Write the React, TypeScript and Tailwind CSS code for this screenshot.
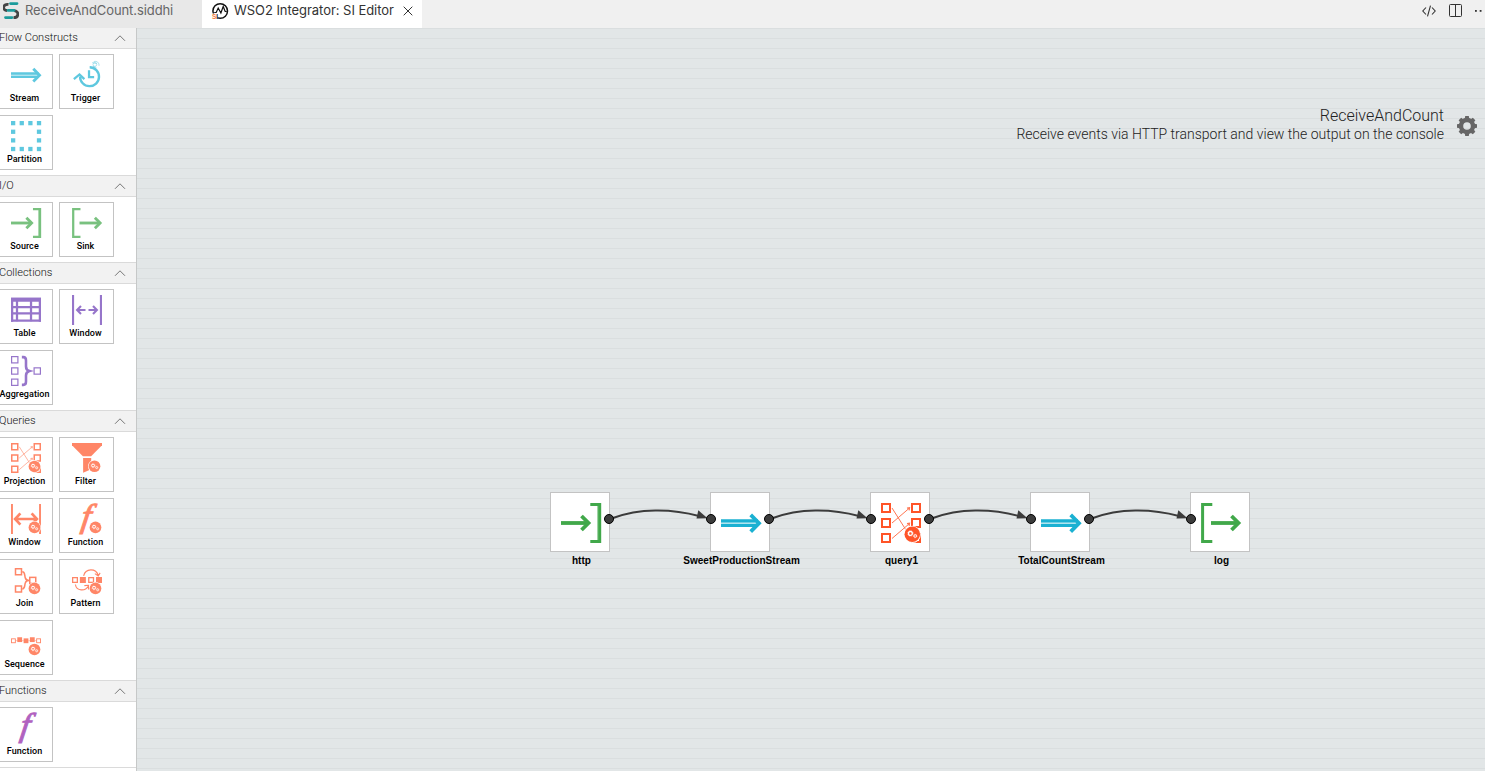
import React from "react";

type IconName =
  | "stream" | "trigger" | "partition" | "source" | "sink" | "table" | "window"
  | "aggregation" | "projection" | "filter" | "windowQuery" | "functionQuery"
  | "join" | "pattern" | "sequence" | "function";

const GearBadge = ({ x = 31.3, y = 31.3 }: { x?: number; y?: number }) => (
  <g transform={`translate(${x} ${y})`}>
    <circle r="8.6" fill="#fff" />
    <circle r="7.8" fill="#ff5428" />
    <g fill="none" stroke="#fff">
      <circle cx="-1.9" cy="-0.9" r="1.9" strokeWidth="1.3" />
      <circle cx="-1.9" cy="-0.9" r="2.7" strokeWidth="0.6" strokeDasharray="1.06 1.06" />
      <circle cx="2.9" cy="1.7" r="1.3" strokeWidth="1" />
      <circle cx="2.9" cy="1.7" r="1.9" strokeWidth="0.4" strokeDasharray="0.75 0.75" />
    </g>
  </g>
);

const Box = ({ x, y, s = 10, w = 2 }: { x: number; y: number; s?: number; w?: number }) => (
  <rect x={x + w / 2} y={y + w / 2} width={s - w} height={s - w} fill="none" strokeWidth={w} />
);

const ScriptF = ({ color }: { color: string }) => (
  <text
    x="13" y="30.8" fontSize="44" fontStyle="italic" fontFamily="Liberation Serif, serif"
    fill={color} stroke={color} strokeWidth="1.3" transform="translate(20 20) skewX(-8) scale(1.06 1) translate(-20 -20)"
  >
    f
  </text>
);

const drawings: Record<IconName, React.ReactNode> = {
  stream: (
    <g stroke="#1bb1d2" fill="none">
      <path d="M0 17.9h37M0 22.5h37" strokeWidth="3.2" />
      <path d="M0 20.2h36" strokeWidth="2" opacity=".35" />
      <path d="M29.7 11.8l8.3 8.400-8.300 8.400" strokeWidth="3.8" />
    </g>
  ),
  trigger: (
    <g stroke="#1bb1d2" fill="none">
      <path d="M23.600 9.700A12.600 12.600 0 1 1 10.800 22" strokeWidth="3.200" />
      <path d="M2.500 25.500l7.500-6.200 6.500 6.200" strokeWidth="3" />
      <path d="M22.700 13.500v9.300h6.800" strokeWidth="3" />
      <path d="M29 2.200c4-1.500 7.500 1.500 7 5.500M27 3.500l6 1M28 8.500l4.500 1.500" strokeWidth="1" opacity=".7" />
      <circle cx="30.500" cy="6" r="2.500" strokeWidth=".9" opacity=".7" />
    </g>
  ),
  partition: (
    <g fill="#1bb1d2">
      {[0, 11.5, 23, 34.5].map((x) => <rect key={x} x={x} y="0" width="5.7" height="5.7" />)}
      {[0, 11.5, 23, 34.5].map((x) => <rect key={x} x={x} y="34.5" width="5.7" height="5.7" />)}
      {[11.5, 23].map((y) => <rect key={y} x="0" y={y} width="5.7" height="5.7" />)}
      {[11.5, 23].map((y) => <rect key={y} x="34.5" y={y} width="5.7" height="5.7" />)}
    </g>
  ),
  source: (
    <g stroke="#41a84a" fill="none">
      <path d="M0 20h27" strokeWidth="3.8" />
      <path d="M20.5 13l7 7-7 7" strokeWidth="3.8" />
      <path d="M29.300 1.5h9.400v37h-9.400" strokeWidth="3" />
      <path d="M37 0v40" strokeWidth="1" />
    </g>
  ),
  sink: (
    <g stroke="#41a84a" fill="none">
      <path d="M10 20h27" strokeWidth="3.8" />
      <path d="M30.5 13l7 7-7 7" strokeWidth="3.8" />
      <path d="M11.3 1.5H1.600v37h9.700" strokeWidth="3" />
    </g>
  ),
  table: (
    <g stroke="#6b3cb5" fill="none">
      <path d="M0 6.200h40" strokeWidth="5.600" />
      <path d="M1.5 4v31.500M38.500 4v31.500M8 4v31M26.700 4v31" strokeWidth="3" />
      <path d="M0 16h40M0 24.600h40M0 34h40" strokeWidth="3" />
    </g>
  ),
  window: (
    <g stroke="#6b3cb5" fill="none" strokeWidth="2.8">
      <path d="M1.4 0v40M38.6 0v40" />
      <path d="M7 20h11M22 20h11M12 14.8L6.8 20l5.2 5.2M28 14.8l5.2 5.2-5.2 5.2" strokeWidth="2.8" />
    </g>
  ),
  aggregation: (
    <g stroke="#6b3cb5">
      <Box x={0} y={0} w={1.6} /><Box x={0} y={15} w={1.6} /><Box x={0} y={30} w={1.6} />
      <Box x={30} y={15} w={1.6} />
      <path d="M14.5 1.5h2c3 0 3.500 2 3.500 4.500v8c0 3 1 5 4.500 6-3.500 1-4.500 3-4.500 6v8c0 2.500-.5 4.500-3.500 4.500h-2" fill="none" strokeWidth="3.400" />
    </g>
  ),
  projection: (
    <g stroke="#ff5428">
      <Box x={0} y={0} /><Box x={0} y={15} /><Box x={0} y={30} />
      <Box x={30} y={0} /><Box x={30} y={15} /><Box x={30} y={30} />
      <g fill="none" strokeWidth="1" opacity=".8">
        <path d="M11 5l14 22M11 20L28.500 5M11 35.500L28.500 20.500" />
        <path d="M26 5.200l2.500-.4-.4 2.500M26 20.700l2.500-.4-.4 2.500" strokeWidth="1.200" />
      </g>
      <g stroke="none"><GearBadge /></g>
    </g>
  ),
  filter: (
    <g>
      <path d="M0 0h40v3L25.500 17.800h-11L0 3z" fill="#ff5428" />
      <path d="M14.800 20h10.800v15l-10.800 4.500z" fill="#ff5428" />
      <GearBadge x={30} y={31} />
    </g>
  ),
  windowQuery: (
    <g>
      <g stroke="#ff5428" fill="none">
        <path d="M1.300 0v40M38.700 0v40" strokeWidth="2.500" />
        <path d="M6 20h28M12.500 12.500L5.500 20l7 7.500M27.500 12.500l7 7.500-7 7.500" strokeWidth="3.600" />
      </g>
      <GearBadge />
    </g>
  ),
  functionQuery: (
    <g>
      <ScriptF color="#ff5428" />
      <GearBadge />
    </g>
  ),
  join: (
    <g>
      <g stroke="#ff5428" transform="translate(0 4)">
        <Box x={5} y={0} /><Box x={5} y={23} /><Box x={24} y={11.500} />
        <path d="M15 5c4 0 3 5 4 8 .6 2.500 2 3.500 5 3.500-3 0-4.400 1-5 3.500-1 3 0 8-4 8" fill="none" strokeWidth="2" />
      </g>
      <GearBadge />
    </g>
  ),
  pattern: (
    <g>
      <g stroke="#ff5428" transform="translate(0 4)">
        <Box x={0} y={12} s={8} w={1.700} />
        <rect x="10.500" y="12" width="8" height="8" fill="#ff5428" stroke="none" />
        <Box x={21.500} y={12} s={8} w={1.700} />
        <rect x="32" y="12" width="8" height="8" fill="#ff5428" stroke="none" />
        <g fill="none" strokeWidth="1.500">
          <path d="M15.500 10.500C18 0 32 0 35 10M37.500 6.500L35 10.500l-4.500-3" />
          <path d="M4.500 22c1.500 9 13 9.500 17.500 2M16.500 23.500l5.500-.5v5.500" />
        </g>
      </g>
      <GearBadge />
    </g>
  ),
  sequence: (
    <g>
      <g stroke="#ff5428" transform="translate(0 3.5)">
        <Box x={0} y={13} s={6.400} w={1.200} />
        <Box x={33.600} y={13} s={6.400} w={1.200} />
        <g fill="#ff5428" stroke="none">
          <rect x="8.400" y="11.500" width="6.400" height="6.400" />
          <rect x="16.800" y="13" width="6.400" height="6.400" />
          <rect x="25.200" y="11.500" width="6.400" height="6.400" />
        </g>
        <path d="M6 16h3M14 16h3M23 16h3M31 16h3" strokeWidth="1" opacity=".6" />
      </g>
      <GearBadge />
    </g>
  ),
  function: <ScriptF color="#911fa6" />,
};

const Icon = ({ name, className }: { name: IconName; className: string }) => (
  <svg viewBox="0 0 40 40" className={`block shrink-0 overflow-visible ${className}`}>{drawings[name]}</svg>
);

const sections: { title: string; items: [IconName, string][] }[] = [
  { title: "Flow Constructs", items: [["stream", "Stream"], ["trigger", "Trigger"], ["partition", "Partition"]] },
  { title: "I/O", items: [["source", "Source"], ["sink", "Sink"]] },
  { title: "Collections", items: [["table", "Table"], ["window", "Window"], ["aggregation", "Aggregation"]] },
  {
    title: "Queries",
    items: [
      ["projection", "Projection"], ["filter", "Filter"], ["windowQuery", "Window"], ["functionQuery", "Function"],
      ["join", "Join"], ["pattern", "Pattern"], ["sequence", "Sequence"],
    ],
  },
  { title: "Functions", items: [["function", "Function"]] },
];

const Tool = ({ icon, label }: { icon: IconName; label: string }) => (
  <div className="flex h-[55px] w-[55px] flex-col items-center border border-[#c3c3c3] bg-white pt-[5px]">
    <Icon name={icon} className="ml-px h-[30px] w-[30px] opacity-70" />
    <span className="mr-[2px] mt-[2px] whitespace-nowrap text-[9px] font-medium leading-[12px] tracking-[0.06px] text-black">{label}</span>
  </div>
);

const Sidebar = () => (
  <aside className="flex h-full w-[137px] shrink-0 flex-col overflow-hidden border-r border-[#c6c8c8] bg-white font-['Roboto',sans-serif]">
    {sections.map((s, i) => (
      <section key={s.title} className="shrink-0">
        <div className={`flex items-center justify-between border-b border-[#dadada] bg-[#f2f2f2] pr-[10px] ${i === 0 ? "h-[21px]" : "h-[22px] border-t"}`}>
          <span className="-ml-px -mt-px text-[11px] font-[350] leading-4 text-[#111]">{s.title}</span>
          <svg viewBox="0 0 12 8" className="-mt-px h-2 w-3" fill="none" stroke="#777" strokeWidth="1"><path d="M1 6.800l5-5 5 5" /></svg>
        </div>
        <div className="-ml-[2px] grid grid-cols-[55px_55px] gap-[6px] py-[5px]">
          {s.items.map(([icon, label]) => <Tool key={icon} icon={icon} label={label} />)}
        </div>
      </section>
    ))}
    <div className="h-1 shrink-0 border-t border-[#dadada] bg-white" />
  </aside>
);

const TabBar = () => (
  <header className="flex h-7 shrink-0 bg-[#f0f0f0] font-['Inter',sans-serif] text-[13px]">
    <div className="flex h-full w-[202px] items-start bg-[#e8e8e8] pl-[3px] text-[#666]">
      <svg viewBox="0 0 16 18" className="mt-[2px] h-[18px] w-4" fill="none" strokeWidth="2.800">
        <path d="M5.500 2.500C-.3 1.500-1 8.500 4 8.500" stroke="#444" />
        <path d="M11 8.700c5.500.3 5 7-.5 7" stroke="#444" />
        <path d="M7.500 1.600h6.500M5 8.400h6M2.500 15.600h6.500" stroke="#1b9b9b" strokeLinecap="round" />
      </svg>
      <span className="ml-[6px] whitespace-nowrap leading-[21px] tracking-[-0.09px]">ReceiveAndCount.siddhi</span>
    </div>
    <div className="flex h-full w-[220px] items-start bg-white pl-[9px] text-[#333]">
      <svg viewBox="0 0 18 18" className="mt-[2px] h-[18px] w-[18px]" fill="none">
        <circle cx="9.200" cy="9" r="7.300" stroke="#111" strokeWidth="1.500" />
        <path d="M3.200 10.500h2l2-4.500 2.700 5L12.200 4.500l2 5h1.500" stroke="#111" strokeWidth="1.200" />
        <path d="M0 11.500h6.500V18H0z" fill="#fff" />
        <text x="1" y="17" fontSize="6.500" fontWeight="700" fontFamily="Liberation Sans, sans-serif" fill="#f47b3c">S<tspan fill="#111">I</tspan></text>
      </svg>
      <span className="ml-[5px] whitespace-nowrap leading-[21px] tracking-[-0.05px]">WSO2 Integrator: SI Editor</span>
      <svg viewBox="0 0 10 10" className="ml-[9px] mt-[6px] h-[10px] w-[10px]" stroke="#333" strokeWidth="1"><path d="M.7.7l8.600 8.600M9.300.7L.7 9.300" /></svg>
    </div>
    <div className="ml-auto flex items-start text-[#333]">
      <svg viewBox="0 0 14 12" className="mt-[5px] h-3 w-[14px]" fill="none" stroke="currentColor" strokeWidth="1.100"><path d="M4 2.500L.8 6 4 9.500M10 2.500L13.200 6 10 9.500M8.500.7l-3 10.600" /></svg>
      <svg viewBox="0 0 13 13" className="ml-[13px] mt-1 h-[13px] w-[13px]" fill="none" stroke="currentColor" strokeWidth="1"><rect x=".5" y=".5" width="12" height="12" rx="1" /><path d="M6.500.5v12" /></svg>
      <svg viewBox="0 0 12 4" className="-mr-[2px] ml-[13px] mt-[9px] h-1 w-3" fill="#333"><rect y="1" width="1.800" height="1.800" /><rect x="4.700" y="1" width="1.800" height="1.800" /></svg>
    </div>
  </header>
);

const nodes: { label: string; icon: IconName; pos: string; left: boolean; right: boolean }[] = [
  { label: "http", icon: "source", pos: "left-[413px]", left: false, right: true },
  { label: "SweetProductionStream", icon: "stream", pos: "left-[573px]", left: true, right: true },
  { label: "query1", icon: "projection", pos: "left-[733px]", left: true, right: true },
  { label: "TotalCountStream", icon: "stream", pos: "left-[893px]", left: true, right: true },
  { label: "log", icon: "sink", pos: "left-[1053px]", left: true, right: false },
];

const Node = ({ label, icon, pos, left, right }: (typeof nodes)[number]) => (
  <div className={`absolute top-[464px] w-[60px] ${pos}`}>
    <div className="relative h-[60px] w-[60px] border border-[#c3c3c3] bg-white p-[10px]">
      <Icon name={icon} className="h-10 w-10" />
      {left && <i className="absolute -left-[5px] top-[21px] h-[10px] w-[10px] rounded-full border border-black bg-[#3c3c3c]" />}
      {right && <i className="absolute -right-[5px] top-[21px] h-[10px] w-[10px] rounded-full border border-black bg-[#3c3c3c]" />}
    </div>
    <div className="ml-[3px] mt-[2px] flex justify-center whitespace-nowrap font-['Liberation_Sans',sans-serif] text-[10px] font-bold leading-[14px] tracking-[0.05px] text-black">{label}</div>
  </div>
);

const gearTeeth = [0, 45, 90, 135, 180, 225, 270, 315];

const Canvas = () => (
  <main className="relative flex-1 overflow-hidden bg-[#e2e6e7] bg-[linear-gradient(to_bottom,#dadedf_1px,transparent_1px)] bg-[length:10px_10px]">
    <div className="flex items-center justify-end pr-2 pt-[78px] font-['Roboto',sans-serif] font-light text-[#222]">
      <div className="text-right">
        <div className="text-[16px] leading-[20px]">ReceiveAndCount</div>
        <div className="text-[14px] leading-[17px]">Receive events via HTTP transport and view the output on the console</div>
      </div>
      <svg viewBox="-10 -10 20 20" className="ml-[13px] mt-[3px] h-5 w-5" fill="#666">
        <circle r="6" fill="none" stroke="#666" strokeWidth="4.400" />
        {gearTeeth.map((a) => <path key={a} d="M-2.300-7l.5-3h3.600l.5 3z" transform={`rotate(${a})`} />)}
      </svg>
    </div>
    <svg className="absolute left-[472px] top-[464px] h-[60px] w-[600px]" fill="none">
      {[0, 160, 320, 480].map((x) => (
        <g key={x} transform={`translate(${x} 0)`}>
          <path d="M4 26C30 16.300 62 16.300 90 24" stroke="#3c3c3c" strokeWidth="2" />
          <path d="M98.500 26.300l-11 .3 1.800-8.300z" fill="#3c3c3c" />
        </g>
      ))}
    </svg>
    {nodes.map((n) => <Node key={n.label} {...n} />)}
  </main>
);

export default function App() {
  return (
    <div className="flex h-[771px] w-[1485px] flex-col overflow-hidden bg-white">
      <TabBar />
      <div className="flex min-h-0 flex-1">
        <Sidebar />
        <Canvas />
      </div>
    </div>
  );
}
